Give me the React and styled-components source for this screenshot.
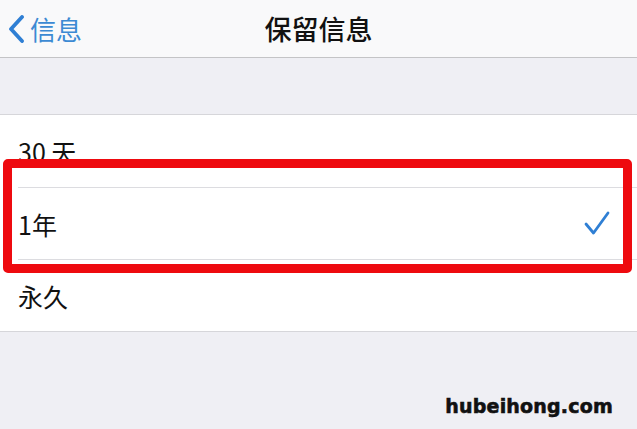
import React from "react";
import styled, { createGlobalStyle } from "styled-components";

const GlobalStyle = createGlobalStyle`
  html, body {
    margin: 0;
    padding: 0;
    background: #efeff4;
  }
  body {
    font-family: "Noto Sans CJK SC", "Noto Sans", sans-serif;
  }
`;

const Screen = styled.div`
  width: 637px;
  height: 429px;
  background: #efeff4;
  position: relative;
  overflow: hidden;
`;

const NavBar = styled.div`
  height: 57px;
  background: #f9f9fa;
  border-bottom: 1px solid #c4c4c6;
  display: flex;
  align-items: center;
  position: relative;
`;

const BackButton = styled.div`
  display: flex;
  align-items: center;
  gap: 5px;
  padding-left: 7px;
  color: #3c8ad3;
  font-size: 26px;
  line-height: 1;
`;

const Title = styled.div`
  position: absolute;
  left: 0;
  right: 0;
  text-align: center;
  font-size: 27px;
  font-weight: 500;
  color: #111;
  pointer-events: none;
`;

const Gap = styled.div`
  height: 56px;
`;

const List = styled.div`
  position: relative;
  background: #fff;
  border-top: 1px solid #d6d6da;
  border-bottom: 1px solid #d6d6da;
`;

const Row = styled.div`
  height: 72px;
  display: flex;
  align-items: center;
  justify-content: space-between;
  margin-left: 18px;
  padding-right: 27px;
  font-size: 25px;
  color: #111;
  border-top: ${(p) => (p.$first ? "none" : "1px solid #dcdce0")};
  box-sizing: border-box;
`;

const Highlight = styled.div`
  position: absolute;
  left: 3px;
  right: 5px;
  top: 44px;
  height: 114px;
  border: 9px solid #ee0a0f;
  border-radius: 5px;
  box-sizing: border-box;
  pointer-events: none;
`;

const Watermark = styled.div`
  position: absolute;
  right: 24px;
  bottom: 12px;
  font-family: "DejaVu Sans", sans-serif;
  font-weight: 700;
  font-size: 19px;
  letter-spacing: 0.2px;
  color: #111;
  -webkit-text-stroke: 0.6px #111;
`;

const Chevron = () => (
  <svg width="18" height="28" viewBox="0 0 18 28">
    <path
      d="M15 2 L4 14 L15 26"
      fill="none"
      stroke="#2f7fd4"
      strokeWidth="3.8"
      strokeLinecap="round"
      strokeLinejoin="round"
    />
  </svg>
);

const Check = () => (
  <svg width="26" height="25" viewBox="0 0 26 25">
    <path
      d="M2 13 L9.5 22 L24 2"
      fill="none"
      stroke="#2f7fd4"
      strokeWidth="2.8"
      strokeLinecap="round"
      strokeLinejoin="round"
    />
  </svg>
);

const options = [
  { label: "30 天", checked: false },
  { label: "1年", checked: true },
  { label: "永久", checked: false },
];

export default function App() {
  return (
    <Screen>
      <GlobalStyle />
      <NavBar>
        <BackButton>
          <Chevron />
          <span>信息</span>
        </BackButton>
        <Title>保留信息</Title>
      </NavBar>
      <Gap />
      <List>
        {options.map((o, i) => (
          <Row key={o.label} $first={i === 0}>
            <span>{o.label}</span>
            {o.checked && <Check />}
          </Row>
        ))}
        <Highlight />
      </List>
      <Watermark>hubeihong.com</Watermark>
    </Screen>
  );
}
